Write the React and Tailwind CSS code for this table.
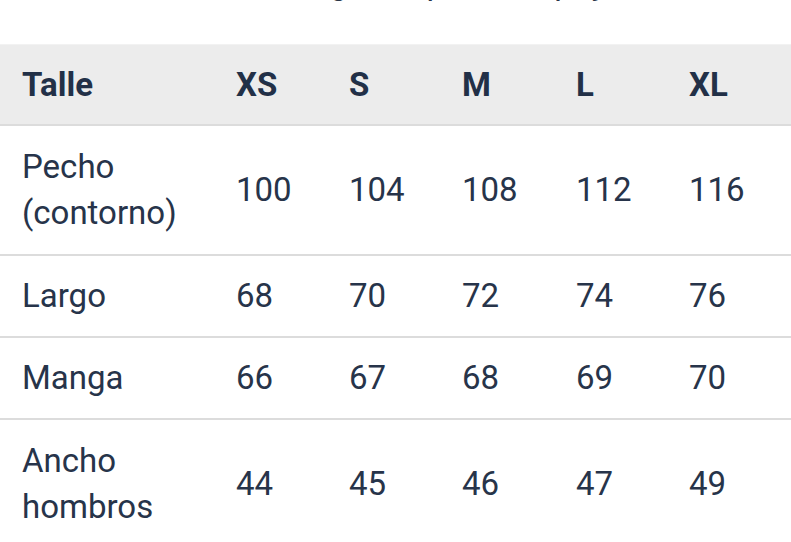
const sizes = ['XS', 'S', 'M', 'L', 'XL']

const rows = [
  { label: ['Pecho', '(contorno)'], values: [100, 104, 108, 112, 116] },
  { label: ['Largo'], values: [68, 70, 72, 74, 76] },
  { label: ['Manga'], values: [66, 67, 68, 69, 70] },
  { label: ['Ancho', 'hombros'], values: [44, 45, 46, 47, 49] },
]

const cols = 'grid grid-cols-[214px_113px_113px_114px_113px_1fr] items-center'

export default function App() {
  return (
    <div className="h-[542px] w-[791px] overflow-hidden bg-white font-['Roboto',sans-serif] text-[#223047]">
      <p className="-mt-[33px] h-[77px] px-[22px] text-[33px] leading-[32px] text-[#2a3548] whitespace-nowrap">
        Medidas tomadas según la prenda apoyada.
      </p>

      <div className={`${cols} h-[82px] border-t border-[#f2f2f2] border-b-2 border-b-[#dcdcdc] bg-[#ececec] text-[33px] font-bold`}>
        <div className="pl-[22px]">Talle</div>
        {sizes.map((s) => (
          <div key={s} className="pl-[22px]">{s}</div>
        ))}
      </div>

      {rows.map((row) => (
        <div
          key={row.label[0]}
          className={`${cols} ${row.label.length > 1 ? 'h-[130px]' : 'h-[82px]'} border-b-2 border-[#dcdcdc] text-[33px] leading-[46px] text-[#27344a]`}
        >
          <div className="pl-[22px]">
            {row.label.map((l) => (
              <div key={l}>{l}</div>
            ))}
          </div>
          {row.values.map((v, i) => (
            <div key={i} className="pl-[22px]">{v}</div>
          ))}
        </div>
      ))}
    </div>
  )
}
